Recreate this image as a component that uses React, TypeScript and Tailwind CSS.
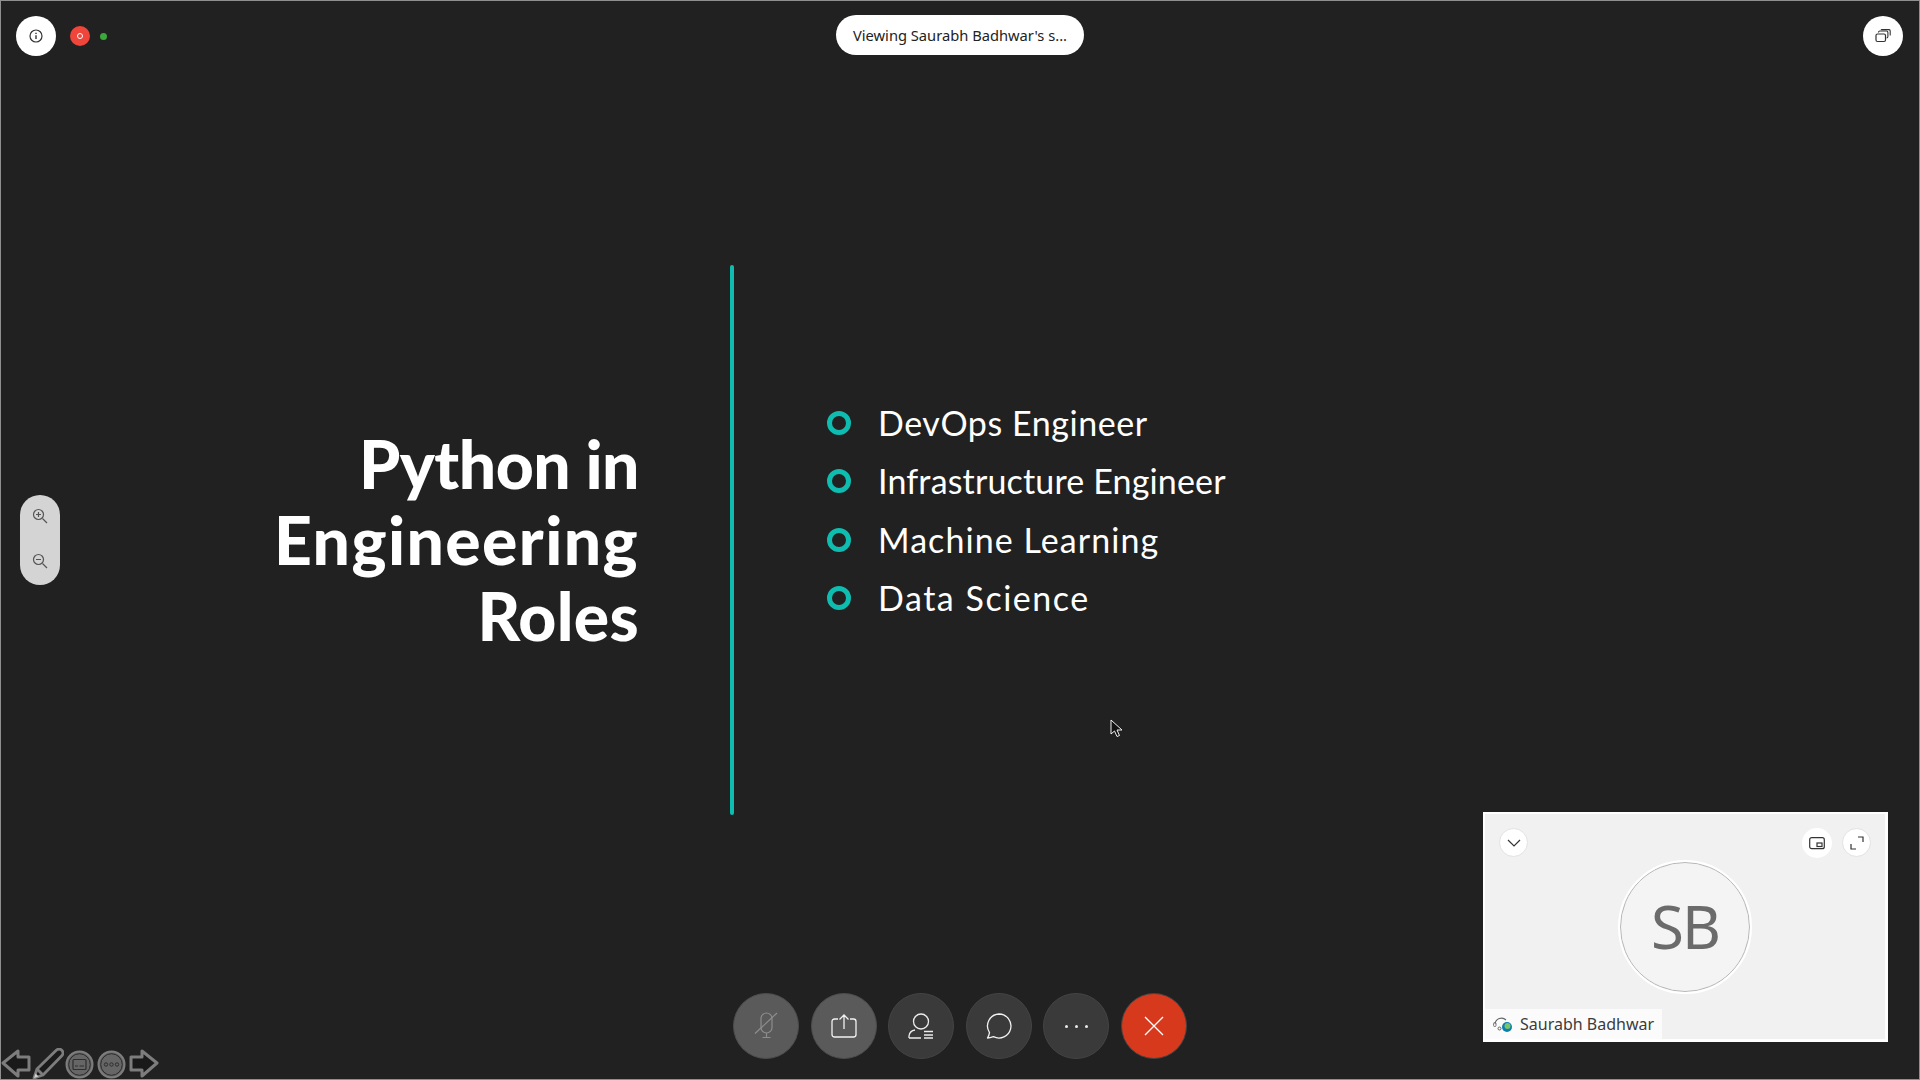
import React from "react";

const ui = { fontFamily: '"Noto Sans", "Open Sans", sans-serif' };
const slide = { fontFamily: 'Lato, "Open Sans", sans-serif' };

function RoundBtn({ className, children }: { className: string; children: React.ReactNode }) {
  return (
    <div className={"flex items-center justify-center rounded-full shrink-0 " + className}>
      {children}
    </div>
  );
}

function Bullet({ text, tracking }: { text: string; tracking: string }) {
  return (
    <li className="flex h-[58.3px] items-center">
      <span className="h-[24px] w-[24px] rounded-full border-[5px] border-[#0fbcb0] shrink-0" />
      <span className={"ml-[27px] text-[34px] font-normal leading-none text-white " + tracking}>{text}</span>
    </li>
  );
}

function NavArrow({ flip }: { flip?: boolean }) {
  return (
    <svg width="30" height="30" viewBox="0 0 30 30" className={flip ? "-scale-x-100" : ""}>
      <path d="M2 14 L17 2 V8 H28 V21 H17 V27 Z" fill="#191919" stroke="#7d7d7d" strokeWidth="3" strokeLinejoin="round" />
    </svg>
  );
}

export default function App() {
  return (
    <div className="relative h-[1080px] w-[1920px] overflow-hidden border border-[#8f8f8f] bg-[#212121]" style={ui}>
      {/* slide */}
      <div className="flex h-full items-start pl-[200px] pt-[264px]" style={slide}>
        <h1 className="mt-[161px] w-[438px] text-right text-[66px] font-black leading-[76px] text-white">
          <span className="block tracking-[-0.5px]">Python in</span>
          <span className="block tracking-[1.4px]">Engineering</span>
          <span className="block tracking-[0.3px]">Roles</span>
        </h1>
        <div className="ml-[91px] h-[550px] w-[4px] rounded-full bg-[#0fbcb0]" />
        <ul className="ml-[93px] mt-[129px]">
          <Bullet text="DevOps Engineer" tracking="tracking-[0.57px]" />
          <Bullet text="Infrastructure Engineer" tracking="tracking-[0.16px]" />
          <Bullet text="Machine Learning" tracking="tracking-[1.07px]" />
          <Bullet text="Data Science" tracking="tracking-[1.53px]" />
        </ul>
      </div>

      {/* top bar */}
      <div className="absolute left-[15px] top-[15px] flex items-center">
        <RoundBtn className="h-[40px] w-[40px] bg-white">
          <svg width="16" height="16" viewBox="0 0 16 16" fill="none" stroke="#333" strokeWidth="1.2">
            <circle cx="8" cy="8" r="6" />
            <path d="M8 7.2V11" strokeWidth="1.4" />
            <path d="M8 4.8V6" strokeWidth="1.4" />
          </svg>
        </RoundBtn>
        <RoundBtn className="ml-[14px] h-[20px] w-[20px] bg-[#f0453a]">
          <span className="h-[6px] w-[6px] rounded-full border-[1.5px] border-white" />
        </RoundBtn>
        <span className="ml-[10px] h-[7px] w-[7px] rounded-full bg-[#3aa83a]" />
      </div>
      <div className="absolute left-[835px] top-[14px] flex h-[40px] w-[248px] items-center justify-center rounded-full bg-white pt-[1px] text-[14.7px] text-[#222]">
        Viewing Saurabh Badhwar's s...
      </div>
      <RoundBtn className="absolute left-[1862px] top-[15px] h-[40px] w-[40px] bg-white">
        <svg width="16" height="14" viewBox="0 0 16 14" fill="none" stroke="#333" strokeWidth="1.1">
          <rect x="1" y="5" width="9.5" height="7.5" rx="1.5" strokeWidth="1.2" />
          <path d="M3.5 3.4V3.2A1.4 1.4 0 0 1 4.9 2H11.5A1.4 1.4 0 0 1 12.9 3.4V7.6A1.4 1.4 0 0 1 11.5 9" />
          <path d="M6 1A1 1 0 0 1 7 .6H14A1.4 1.4 0 0 1 15.2 2V6.5" />
        </svg>
      </RoundBtn>

      {/* zoom */}
      <div className="absolute left-[19px] top-[494px] flex h-[90px] w-[40px] flex-col items-center justify-between rounded-full bg-[#d4d4d4] pb-[16px] pt-[13px]">
        <svg width="16" height="16" viewBox="0 0 16 16" fill="none" stroke="#555" strokeWidth="1.2">
          <circle cx="6.5" cy="6.5" r="5" />
          <path d="M10.5 10.5L15 15M4 6.5H9M6.5 4V9" />
        </svg>
        <svg width="16" height="16" viewBox="0 0 16 16" fill="none" stroke="#555" strokeWidth="1.2">
          <circle cx="6.5" cy="6.5" r="5" />
          <path d="M10.5 10.5L15 15M4 6.5H9" />
        </svg>
      </div>

      {/* call controls */}
      <div className="absolute left-[732px] top-[992px] flex items-center gap-[11.5px]">
        <RoundBtn className="h-[66px] w-[66px] border border-[#4c4c4c] bg-[#5a5a5a]">
          <svg width="24" height="28" viewBox="0 0 24 28" fill="none" stroke="#8d8d8d" strokeWidth="1.2">
            <rect x="7" y="1" width="11" height="20" rx="5.5" />
            <path d="M12.5 21V25.5M8.5 25.5H16.5" />
            <path d="M1 21.5L23 1" />
          </svg>
        </RoundBtn>
        <RoundBtn className="h-[66px] w-[66px] border border-[#4c4c4c] bg-[#5a5a5a]">
          <svg width="26" height="24" viewBox="0 0 26 24" fill="none" stroke="#f2f2f2" strokeWidth="1.3">
            <path d="M7 5H3.5A2.5 2.5 0 0 0 1 7.5V20.5A2.5 2.5 0 0 0 3.5 23H22.5A2.5 2.5 0 0 0 25 20.5V7.5A2.5 2.5 0 0 0 22.5 5H19" />
            <path d="M13 15V1M8.5 5.5L13 1L17.5 5.5" />
          </svg>
        </RoundBtn>
        <RoundBtn className="h-[66px] w-[66px] border border-[#444] bg-[#3a3a3a]">
          <svg width="26" height="26" viewBox="0 0 26 26" fill="none" stroke="#ececec" strokeWidth="1.3">
            <circle cx="13" cy="8.5" r="7.5" />
            <path d="M1 25V23A7 7 0 0 1 7 17M1 25H13" />
            <path d="M16 18.5H25M16 22H25M16 25H25" strokeWidth="1.4" />
          </svg>
        </RoundBtn>
        <RoundBtn className="h-[66px] w-[66px] border border-[#444] bg-[#3a3a3a]">
          <svg width="26" height="26" viewBox="0 0 26 26" fill="none" stroke="#f2f2f2" strokeWidth="1.3">
            <path d="M13 1A12 12 0 1 1 7.5 23.7C5.5 24.4 3.5 25 1.5 25C2.8 22.8 3.3 21 3.5 19.6A12 12 0 0 1 13 1Z" strokeLinejoin="round" />
          </svg>
        </RoundBtn>
        <RoundBtn className="h-[66px] w-[66px] border border-[#444] bg-[#3a3a3a]">
          <div className="flex gap-[7px]">
            <span className="h-[3px] w-[3px] rounded-full bg-[#e8e8e8]" />
            <span className="h-[3px] w-[3px] rounded-full bg-[#e8e8e8]" />
            <span className="h-[3px] w-[3px] rounded-full bg-[#e8e8e8]" />
          </div>
        </RoundBtn>
        <RoundBtn className="h-[66px] w-[66px] border border-[#444] bg-[#d6391b]">
          <svg width="20" height="20" viewBox="0 0 20 20" fill="none" stroke="#fff" strokeWidth="1.3">
            <path d="M1 1L19 19M19 1L1 19" />
          </svg>
        </RoundBtn>
      </div>

      {/* slide show nav */}
      <div className="absolute bottom-[-1px] left-[0px] flex items-center gap-[1px]">
        <NavArrow />
        <svg width="32" height="32" viewBox="0 0 32 32" fill="none">
          <path d="M2 30L5 21L24 2.5C26 .8 28.5 1 30 2.5C31.3 4 31.3 6 29.8 7.8L11 27Z" fill="#1a1a1a" stroke="#7d7d7d" strokeWidth="2.8" strokeLinejoin="round" />
          <path d="M5 21L11 27" stroke="#7d7d7d" strokeWidth="2.8" />
          <path d="M2 30L3.5 25.5L6.5 28.5Z" fill="#d0d0d0" />
        </svg>
        <svg width="29" height="29" viewBox="0 0 29 29" fill="none">
          <circle cx="14.5" cy="14.5" r="13" fill="#666" stroke="#7d7d7d" strokeWidth="2" />
          <circle cx="14.5" cy="14.5" r="10.8" stroke="#2a2a2a" strokeWidth="1" />
          <rect x="8" y="9.5" width="13" height="10" rx="1" stroke="#2e2e2e" strokeWidth="1.2" />
          <path d="M10 16H13M14.5 16H19" stroke="#2e2e2e" strokeWidth="1.2" />
        </svg>
        <svg width="29" height="29" viewBox="0 0 29 29" fill="none" className="ml-[2px]">
          <circle cx="14.5" cy="14.5" r="13" fill="#666" stroke="#7d7d7d" strokeWidth="2" />
          <circle cx="14.5" cy="14.5" r="10.8" stroke="#2a2a2a" strokeWidth="1" />
          <circle cx="9" cy="14.5" r="1.7" stroke="#2e2e2e" />
          <circle cx="14.5" cy="14.5" r="1.7" stroke="#2e2e2e" />
          <circle cx="20" cy="14.5" r="1.7" stroke="#2e2e2e" />
        </svg>
        <div className="ml-[2px]">
          <NavArrow flip />
        </div>
      </div>

      {/* cursor */}
      <svg className="absolute left-[1109px] top-[718px]" width="13" height="19" viewBox="0 0 13 19">
        <path d="M1 1V15L4.5 12L7 17.5L9.5 16.5L7 11H12Z" fill="#111" stroke="#f2f2f2" strokeWidth="1" />
      </svg>

      {/* video tile */}
      <div className="absolute left-[1482px] top-[811px] flex h-[230px] w-[405px] flex-col border-b-[3px] border-l-[2px] border-r-[3px] border-t-[2px] border-white bg-[#f1f1f1]">
        <div className="flex items-start pl-[14px] pr-[14px] pt-[14px]">
          <RoundBtn className="h-[29px] w-[29px] border border-[#e2e2e2] bg-white">
            <svg width="14" height="8" viewBox="0 0 14 8" fill="none" stroke="#333" strokeWidth="1.2">
              <path d="M1 1L7 7L13 1" />
            </svg>
          </RoundBtn>
          <RoundBtn className="ml-auto h-[30px] w-[30px] bg-white">
            <svg width="16" height="13" viewBox="0 0 16 13" fill="none" stroke="#333" strokeWidth="1.2">
              <rect x=".7" y=".7" width="14.6" height="11" rx="2" />
              <rect x="8" y="6" width="5" height="3.5" />
            </svg>
          </RoundBtn>
          <RoundBtn className="ml-[10px] h-[29px] w-[29px] border border-[#e2e2e2] bg-white">
            <svg width="14" height="14" viewBox="0 0 14 14" fill="none" stroke="#333" strokeWidth="1.2">
              <path d="M8 1H13V6M1 8V13H6" />
            </svg>
          </RoundBtn>
        </div>
        <div className="mt-[4px] flex justify-center">
          <div className="flex h-[130px] w-[130px] items-center justify-center rounded-full border border-[#b8b8b8] bg-[#f4f4f4] pb-[2px] text-[60px] leading-none text-[#6b6b6b] outline-2 outline-white tracking-[-2px]">
            SB
          </div>
        </div>
        <div className="mt-[17px] flex h-[30px] w-[177px] items-center bg-[#fbfbfb] pb-[1px] pl-[8px] text-[16px] text-[#3c3c3c]">
          <svg width="20" height="18" viewBox="0 0 20 18" fill="none" className="shrink-0">
            <path d="M2 9A6.5 6.5 0 0 1 13 5" stroke="#666" strokeWidth="1.1" />
            <rect x=".6" y="7.5" width="2.4" height="4" rx="1" stroke="#666" strokeWidth=".9" />
            <circle cx="6.5" cy="13.5" r="1.5" stroke="#555" strokeWidth=".9" />
            <circle cx="14" cy="12" r="5" fill="#0b7fae" />
            <circle cx="14.5" cy="11" r="3" fill="#7cc36a" />
          </svg>
          <span className="ml-[7px]">Saurabh Badhwar</span>
        </div>
      </div>
    </div>
  );
}
